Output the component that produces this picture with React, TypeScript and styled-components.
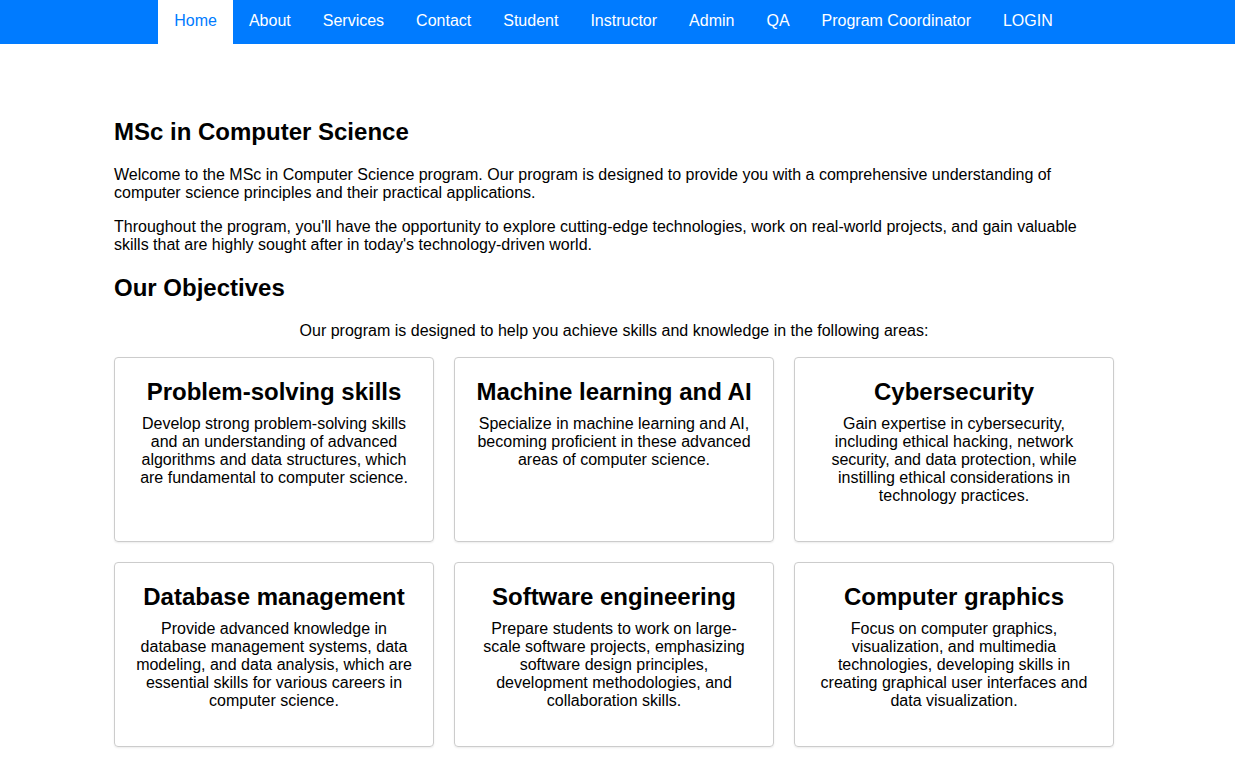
import React from "react";
import styled, { createGlobalStyle } from "styled-components";

const GlobalStyle = createGlobalStyle`
  html, body {
    margin: 0;
    padding: 0;
    background: #ffffff;
  }
  body {
    font-family: "Liberation Sans", Arial, sans-serif;
    color: #000000;
    font-size: 16px;
  }
`;

const NavBar = styled.nav`
  background: #007bff;
  height: 44px;
  padding-right: 8px;
`;

const NavList = styled.ul`
  list-style: none;
  margin: 0;
  padding: 0;
  height: 100%;
  display: flex;
  justify-content: center;
`;

const NavItem = styled.li<{ $active?: boolean }>`
  background: ${(p) => (p.$active ? "#ffffff" : "transparent")};
`;

const NavLink = styled.a<{ $active?: boolean }>`
  display: block;
  box-sizing: border-box;
  height: 44px;
  padding: 12px 16px 0;
  color: ${(p) => (p.$active ? "#007bff" : "#ffffff")};
  text-decoration: none;
  font-size: 16px;
  line-height: 18px;
`;

const Main = styled.main`
  width: 1000px;
  margin: 0 auto;
  padding: 54px 7px 20px 0;
  box-sizing: content-box;
`;

const Heading = styled.h2`
  font-size: 24px;
  font-weight: bold;
  margin: 20px 0;
  line-height: 28px;
`;

const Para = styled.p<{ $center?: boolean }>`
  margin: 16px 0;
  line-height: 18px;
  text-align: ${(p) => (p.$center ? "center" : "left")};
`;

const Grid = styled.div`
  display: grid;
  grid-template-columns: repeat(3, 1fr);
  gap: 20px;
  margin-top: 17px;
`;

const Card = styled.div`
  border: 1px solid #cccccc;
  border-radius: 4px;
  box-shadow: 0 1px 2px rgba(0, 0, 0, 0.08);
  padding: 20px;
  text-align: center;
`;

const CardTitle = styled.h3`
  font-size: 24px;
  font-weight: bold;
  margin: 0 0 9px;
  line-height: 28px;
`;

const CardText = styled.p`
  margin: 0 0 16px;
  line-height: 18px;
`;

const navItems = [
  "Home",
  "About",
  "Services",
  "Contact",
  "Student",
  "Instructor",
  "Admin",
  "QA",
  "Program Coordinator",
  "LOGIN",
];

const objectives = [
  {
    title: "Problem-solving skills",
    text: "Develop strong problem-solving skills and an understanding of advanced algorithms and data structures, which are fundamental to computer science.",
  },
  {
    title: "Machine learning and AI",
    text: "Specialize in machine learning and AI, becoming proficient in these advanced areas of computer science.",
  },
  {
    title: "Cybersecurity",
    text: "Gain expertise in cybersecurity, including ethical hacking, network security, and data protection, while instilling ethical considerations in technology practices.",
  },
  {
    title: "Database management",
    text: "Provide advanced knowledge in database management systems, data modeling, and data analysis, which are essential skills for various careers in computer science.",
  },
  {
    title: "Software engineering",
    text: "Prepare students to work on large-scale software projects, emphasizing software design principles, development methodologies, and collaboration skills.",
  },
  {
    title: "Computer graphics",
    text: "Focus on computer graphics, visualization, and multimedia technologies, developing skills in creating graphical user interfaces and data visualization.",
  },
];

export default function App() {
  return (
    <>
      <GlobalStyle />
      <NavBar>
        <NavList>
          {navItems.map((item, i) => (
            <NavItem key={item} $active={i === 0}>
              <NavLink href="#" $active={i === 0}>
                {item}
              </NavLink>
            </NavItem>
          ))}
        </NavList>
      </NavBar>
      <Main>
        <Heading>MSc in Computer Science</Heading>
        <Para>
          Welcome to the MSc in Computer Science program. Our program is designed to provide you with a comprehensive understanding of computer science principles and their practical applications.
        </Para>
        <Para>
          Throughout the program, you'll have the opportunity to explore cutting-edge technologies, work on real-world projects, and gain valuable skills that are highly sought after in today's technology-driven world.
        </Para>
        <Heading>Our Objectives</Heading>
        <Para $center>
          Our program is designed to help you achieve skills and knowledge in the following areas:
        </Para>
        <Grid>
          {objectives.map((o) => (
            <Card key={o.title}>
              <CardTitle>{o.title}</CardTitle>
              <CardText>{o.text}</CardText>
            </Card>
          ))}
        </Grid>
      </Main>
    </>
  );
}
